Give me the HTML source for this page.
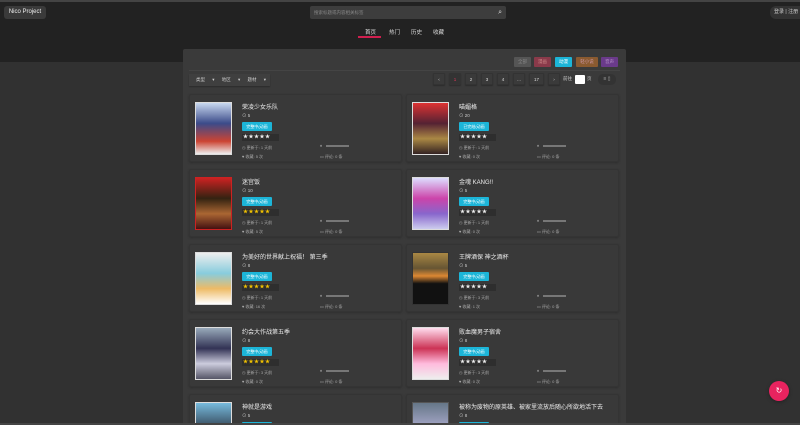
<!DOCTYPE html>
<html style="width:800px;height:425px;overflow:hidden"><head><meta charset="utf-8"><style>
*{margin:0;padding:0;box-sizing:border-box}
body{width:800px;height:425px;overflow:hidden;background:#313131;font-family:"Liberation Sans","Noto Sans CJK SC",sans-serif;color:#ddd;position:relative}
#wrap{position:absolute;left:0;top:0;width:800px;height:425px;overflow:hidden}
.abs{position:absolute}
#top{left:0;top:0;width:800px;height:62px;background:#222;border-top:2px solid #444}
.logo{left:4px;top:6px;width:42px;height:13px;background:#3a3a3a;border-radius:3px;font-size:6px;color:#eee;text-align:center;line-height:13px}
.search{left:310px;top:6px;width:196px;height:13px;background:#3d3d3d;border-radius:2px;font-size:4.5px;color:#888;line-height:13px;padding-left:4px}
.login{left:770px;top:6px;width:40px;height:13px;background:#333;border-radius:6px;font-size:5px;line-height:13px;padding-left:4px;color:#ccc}
.nav{top:28px;font-size:5.5px;color:#ddd}
#panel{left:183px;top:49px;width:443px;height:376px;background:#3a3a3a;border-radius:2px}
.tag{top:57px;height:10px;width:17px;font-size:4.5px;line-height:10px;text-align:center;border-radius:1px;color:#ccc}
.pg{top:73px;height:12px;width:12px;background:#3a3a3a;border:1px solid #333;font-size:4.5px;line-height:11px;text-align:center;color:#ddd;border-radius:1px;box-shadow:0 1px 1px #2c2c2c}
.card{width:213px;height:68px;background:#393939;border:1px solid #343434;border-radius:2px;box-shadow:0 1px 2px #2e2e2e;overflow:hidden}
.cv{position:absolute;left:5px;top:7px;width:37px;height:53px;border:1px solid #ddd}
.t{position:absolute;left:52px;top:7px;font-size:6px;color:#eee;white-space:nowrap}
.n{position:absolute;left:52px;top:18px;font-size:4.5px;color:#ccc}
.b{position:absolute;left:52px;top:27px;width:30px;height:9px;background:#1cb5d8;font-size:4px;color:#fff;line-height:9px;text-align:center;border-radius:1px}
.s{position:absolute;left:52px;top:39px;width:37px;height:7px;background:#2e2e2e;font-size:5px;line-height:7px;letter-spacing:0.5px;padding-left:1px;color:#eee}
.s.y{color:#f2c200}
.m{position:absolute;font-size:4px;color:#aaa}
.bar{position:absolute;left:136px;top:50px;width:23px;height:1.5px;background:#777}
</style></head><body><div id="wrap">
<div id="top" class="abs"></div>
<div class="abs logo">Nico Project</div>
<div class="abs search">搜索标题或内容相关标签<span style="position:absolute;right:4px;color:#ddd;font-size:7px">⌕</span></div>
<div class="abs login">登录 | 注册</div>
<div class="abs nav" style="left:365px">首页</div>
<div class="abs" style="left:358px;top:36px;width:23px;height:1.5px;background:#d01f4f"></div>
<div class="abs nav" style="left:389px">热门</div>
<div class="abs nav" style="left:411px">历史</div>
<div class="abs nav" style="left:433px">收藏</div>
<div id="panel" class="abs"></div>
<div class="abs tag" style="left:514px;background:#555;color:#888">全部</div>
<div class="abs tag" style="left:534px;background:#8a3a4a;color:#c88">漫画</div>
<div class="abs tag" style="left:555px;background:#1cb5d8;color:#fff">动漫</div>
<div class="abs tag" style="left:576px;width:22px;background:#8a5a30;color:#c9a">轻小说</div>
<div class="abs tag" style="left:601px;background:#6a3a8a;color:#b9c">音声</div>
<div class="abs" style="left:189px;top:70px;width:431px;height:1px;background:#444"></div>
<div class="abs" style="left:189px;top:74px;width:81px;height:12px;background:#3f3f3f;box-shadow:0 1px 1px #2c2c2c;font-size:4.5px;line-height:12px;color:#ccc;padding-left:7px;word-spacing:6px">类型 ▾ 地区 ▾ 题材 ▾</div>
<div class="abs pg" style="left:433px">‹</div>
<div class="abs pg" style="left:449px;color:#e0365a;background:#333">1</div>
<div class="abs pg" style="left:465px">2</div>
<div class="abs pg" style="left:481px">3</div>
<div class="abs pg" style="left:497px">4</div>
<div class="abs pg" style="left:513px">…</div>
<div class="abs pg" style="left:529px;width:15px">17</div>
<div class="abs pg" style="left:548px">›</div>
<div class="abs" style="left:563px;top:76px;font-size:4.5px;color:#ccc">前往</div>
<div class="abs" style="left:575px;top:75px;width:10px;height:9px;background:#fff;border-radius:1px"></div>
<div class="abs" style="left:587px;top:76px;font-size:4.5px;color:#ccc">页</div>
<div class="abs" style="left:598px;top:74px;width:18px;height:11px;background:#333;border-radius:5px;font-size:5px;color:#aaa;text-align:center;line-height:11px">≡ ▯</div>

<div class="abs card" style="left:189px;top:94px"><div class="cv" style="background:linear-gradient(#c8d8f0,#3b4b8a 40%,#c43 75%,#eee)"></div><div class="t">荣凌少女乐队</div><div class="n">⊙ 5</div><div class="b">完整中(动画</div><div class="s">★★★★★</div><div class="m" style="left:52px;top:50px">◷ 更新于: 1 天前</div><div class="m" style="left:130px;top:48px">♦</div><div class="bar"></div><div class="m" style="left:52px;top:59px">♥ 收藏: 5 次</div><div class="m" style="left:130px;top:59px">▭ 评论: 0 条</div></div>
<div class="abs card" style="left:406px;top:94px"><div class="cv" style="background:linear-gradient(#d33,#523 40%,#a84 70%,#322)"></div><div class="t">喵媚格</div><div class="n">⊙ 20</div><div class="b">已完结(动画</div><div class="s">★★★★★</div><div class="m" style="left:52px;top:50px">◷ 更新于: 1 天前</div><div class="m" style="left:130px;top:48px">♦</div><div class="bar"></div><div class="m" style="left:52px;top:59px">♥ 收藏: 0 次</div><div class="m" style="left:130px;top:59px">▭ 评论: 0 条</div></div>

<div class="abs card" style="left:189px;top:169px"><div class="cv" style="background:linear-gradient(#c22,#321 40%,#a63 70%,#411);border-color:#c22"></div><div class="t">迷宫饭</div><div class="n">⊙ 10</div><div class="b">完整中(动画</div><div class="s y">★★★★★</div><div class="m" style="left:52px;top:50px">◷ 更新于: 1 天前</div><div class="m" style="left:130px;top:48px">♦</div><div class="bar"></div><div class="m" style="left:52px;top:59px">♥ 收藏: 5 次</div><div class="m" style="left:130px;top:59px">▭ 评论: 0 条</div></div>
<div class="abs card" style="left:406px;top:169px"><div class="cv" style="background:linear-gradient(#ddf,#c4a 40%,#86c 70%,#cce)"></div><div class="t">金魂 KANG!!</div><div class="n">⊙ 5</div><div class="b">完整中(动画</div><div class="s">★★★★★</div><div class="m" style="left:52px;top:50px">◷ 更新于: 1 天前</div><div class="m" style="left:130px;top:48px">♦</div><div class="bar"></div><div class="m" style="left:52px;top:59px">♥ 收藏: 0 次</div><div class="m" style="left:130px;top:59px">▭ 评论: 0 条</div></div>

<div class="abs card" style="left:189px;top:244px"><div class="cv" style="background:linear-gradient(#eee,#8cd 40%,#eb6 70%,#fff)"></div><div class="t">为美好的世界献上祝福！ 第三季</div><div class="n">⊙ 8</div><div class="b">完整中(动画</div><div class="s y">★★★★★</div><div class="m" style="left:52px;top:50px">◷ 更新于: 1 天前</div><div class="m" style="left:130px;top:48px">♦</div><div class="bar"></div><div class="m" style="left:52px;top:59px">♥ 收藏: 16 次</div><div class="m" style="left:130px;top:59px">▭ 评论: 0 条</div></div>
<div class="abs card" style="left:406px;top:244px"><div class="cv" style="background:linear-gradient(#a84,#653 30%,#d83 45%,#111 60%,#111);border-color:#333"></div><div class="t">王牌酒保 神之酒杯</div><div class="n">⊙ 5</div><div class="b">完整中(动画</div><div class="s">★★★★★</div><div class="m" style="left:52px;top:50px">◷ 更新于: 3 天前</div><div class="m" style="left:130px;top:48px">♦</div><div class="bar"></div><div class="m" style="left:52px;top:59px">♥ 收藏: 1 次</div><div class="m" style="left:130px;top:59px">▭ 评论: 0 条</div></div>

<div class="abs card" style="left:189px;top:319px"><div class="cv" style="background:linear-gradient(#9ab,#335 40%,#ccd 70%,#556)"></div><div class="t">约会大作战第五季</div><div class="n">⊙ 8</div><div class="b">完整中(动画</div><div class="s y">★★★★★</div><div class="m" style="left:52px;top:50px">◷ 更新于: 3 天前</div><div class="m" style="left:130px;top:48px">♦</div><div class="bar"></div><div class="m" style="left:52px;top:59px">♥ 收藏: 0 次</div><div class="m" style="left:130px;top:59px">▭ 评论: 0 条</div></div>
<div class="abs card" style="left:406px;top:319px"><div class="cv" style="background:linear-gradient(#fde,#c35 40%,#fbd 70%,#eee)"></div><div class="t">败血魔男子宿舍</div><div class="n">⊙ 8</div><div class="b">完整中(动画</div><div class="s">★★★★★</div><div class="m" style="left:52px;top:50px">◷ 更新于: 3 天前</div><div class="m" style="left:130px;top:48px">♦</div><div class="bar"></div><div class="m" style="left:52px;top:59px">♥ 收藏: 0 次</div><div class="m" style="left:130px;top:59px">▭ 评论: 0 条</div></div>

<div class="abs card" style="left:189px;top:394px"><div class="cv" style="background:linear-gradient(#7bd,#345 50%,#d55)"></div><div class="t">神就是游戏</div><div class="n">⊙ 5</div><div class="b">完整中(动画</div></div>
<div class="abs card" style="left:406px;top:394px"><div class="cv" style="background:linear-gradient(#678,#aac 50%,#d96);border-color:#555"></div><div class="t">被称为废物的原英雄、被家里流放后随心所欲地活下去</div><div class="n">⊙ 8</div><div class="b">完整中(动画</div></div>

<div class="abs" style="left:769px;top:381px;width:20px;height:20px;border-radius:50%;background:#e8235f;box-shadow:0 1px 3px #222;color:#fff;font-size:8px;text-align:center;line-height:20px">↻</div>
<div class="abs" style="left:0;top:423px;width:800px;height:2px;background:#444"></div>
</div></body></html>
